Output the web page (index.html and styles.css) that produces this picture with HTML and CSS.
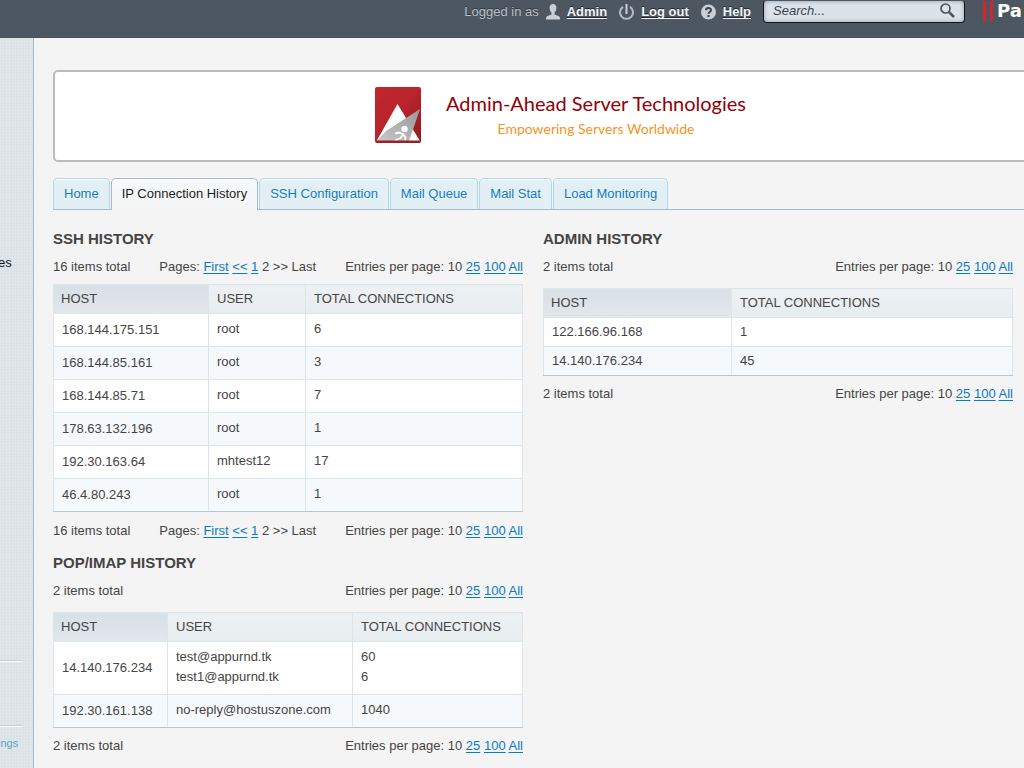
FILE: index.html
```html
<!DOCTYPE html>
<html lang="en">
<head>
    <meta charset="UTF-8">
    <meta name="viewport" content="width=device-width, initial-scale=1.0">
    <title>IP Connection History</title>
    <link rel="stylesheet" href="styles.css">
</head>
<body>
    <header class="topbar">
        <span class="logged">Logged in as</span>
        <a class="top-link user" href="#">
            <svg width="14" height="16" viewBox="0 0 14 16"><path d="M7 0C4.600 0 3.500 1.700 3.600 4C3.700 6.300 4.600 7.800 5.500 8.700V10.500L1.500 12C.5 12.400 0 13.300 0 15.500H14C14 13.300 13.500 12.400 12.500 12L8.500 10.500V8.700C9.400 7.800 10.300 6.300 10.400 4C10.500 1.700 9.400 0 7 0Z" fill="#c9cfd6"/></svg>
            <span>Admin</span>
        </a>
        <a class="top-link" href="#">
            <svg width="15" height="16" viewBox="0 0 15 16"><path d="M4 2.800A6.500 6.500 0 1 0 11 2.800" fill="none" stroke="#b4bbc3" stroke-width="2"/><path d="M7.500 0V10" stroke="#c9cfd6" stroke-width="2"/></svg>
            <span>Log out</span>
        </a>
        <a class="top-link" href="#">
            <svg width="15" height="16" viewBox="0 0 15 16"><circle cx="7.500" cy="8" r="7.500" fill="#c9cfd6"/><path d="M5 6.300C5 3.400 10 3.400 10 6.200C10 7.900 7.500 8 7.500 9.800" fill="none" stroke="#3d454e" stroke-width="2"/><path d="M6.400 11H8.600V13H6.400Z" fill="#3d454e"/></svg>
            <span>Help</span>
        </a>
        <form class="search">
            <input type="text" placeholder="Search..." aria-label="Search">
            <button type="button" aria-label="Find">
                <svg width="15" height="15" viewBox="0 0 15 15"><circle cx="5.500" cy="5.500" r="4.500" fill="none" stroke="#4d5761" stroke-width="1.700"/><path d="M8.800 8.800L14 14" stroke="#4d5761" stroke-width="2.600"/></svg>
            </button>
        </form>
        <div class="brand">
            <svg width="11" height="20" viewBox="0 0 11 20"><path d="M0 0H3V20H0ZM7 0H10V20H7Z" fill="#d8232f"/></svg>
            <span>Pa</span>
        </div>
    </header>

    <div class="layout">
        <nav class="sidebar">
            <a class="side-item" href="#">es</a>
            <hr class="first">
            <hr>
            <a class="side-small" href="#">ings</a>
        </nav>

        <main class="content">
            <div class="banner">
                <svg width="46" height="56" viewBox="0 0 46 56">
                    <defs>
                        <linearGradient id="red" x1="0" y1="0" x2="1" y2="1"><stop offset="0" stop-color="#c1272d"/><stop offset=".5" stop-color="#b8232c"/><stop offset="1" stop-color="#8c1c20"/></linearGradient>
                        <linearGradient id="grey" x1="0" y1="1" x2="1" y2="0"><stop offset="0" stop-color="#c8c8c8"/><stop offset="1" stop-color="#989898"/></linearGradient>
                    </defs>
                    <rect width="46" height="56" rx="2" fill="url(#red)"/>
                    <path d="M22.500 17L45 54H1.500Z" fill="#fff"/>
                    <path d="M45 22L34 54H1.500L11 44Z" fill="url(#grey)"/>
                    <circle cx="29.500" cy="42" r="3.200" fill="#fff"/>
                    <path d="M20 46.500L24.500 45.500L28.500 47.500M28 47L30.500 50.500L30 54M28 47.500L25.500 51L20 53.500" fill="none" stroke="#fff" stroke-width="1.800"/>
                    <path d="M1 54.500H45" stroke="#9c1f26" stroke-width="2"/>
                </svg>
                <div class="banner-text">
                    <div class="banner-title">Admin-Ahead Server Technologies</div>
                    <div class="banner-sub">Empowering Servers Worldwide</div>
                </div>
            </div>

            <nav class="tabs">
                <a href="#">Home</a>
                <a href="#" class="active">IP Connection History</a>
                <a href="#">SSH Configuration</a>
                <a href="#">Mail Queue</a>
                <a href="#">Mail Stat</a>
                <a href="#">Load Monitoring</a>
            </nav>

            <div class="columns">
                <div class="column">
                    <section class="panel compact">
                        <h2>SSH HISTORY</h2>
                        <div class="pager">
                            <span>16 items total</span>
                            <span>Pages: <a href="#">First</a> <a href="#">&lt;&lt;</a> <a href="#">1</a> 2 &gt;&gt; Last</span>
                            <span>Entries per page: 10 <a href="#">25</a> <a href="#">100</a> <a href="#">All</a></span>
                        </div>
                        <table>
                            <colgroup><col class="ssh-host"><col class="ssh-user"><col></colgroup>
                            <thead><tr><th class="sorted">HOST</th><th>USER</th><th>TOTAL CONNECTIONS</th></tr></thead>
                            <tbody>
                                <tr><td class="host">168.144.175.151</td><td>root</td><td>6</td></tr>
                                <tr><td class="host">168.144.85.161</td><td>root</td><td>3</td></tr>
                                <tr><td class="host">168.144.85.71</td><td>root</td><td>7</td></tr>
                                <tr><td class="host">178.63.132.196</td><td>root</td><td>1</td></tr>
                                <tr><td class="host">192.30.163.64</td><td>mhtest12</td><td>17</td></tr>
                                <tr><td class="host">46.4.80.243</td><td>root</td><td>1</td></tr>
                            </tbody>
                        </table>
                        <div class="pager">
                            <span>16 items total</span>
                            <span>Pages: <a href="#">First</a> <a href="#">&lt;&lt;</a> <a href="#">1</a> 2 &gt;&gt; Last</span>
                            <span>Entries per page: 10 <a href="#">25</a> <a href="#">100</a> <a href="#">All</a></span>
                        </div>
                    </section>

                    <section class="panel">
                        <h2>POP/IMAP HISTORY</h2>
                        <div class="pager">
                            <span>2 items total</span>
                            <span>Entries per page: 10 <a href="#">25</a> <a href="#">100</a> <a href="#">All</a></span>
                        </div>
                        <table>
                            <colgroup><col class="pop-host"><col class="pop-user"><col></colgroup>
                            <thead><tr><th class="sorted">HOST</th><th>USER</th><th>TOTAL CONNECTIONS</th></tr></thead>
                            <tbody>
                                <tr><td class="host">14.140.176.234</td><td>test@appurnd.tk<br>test1@appurnd.tk</td><td>60<br>6</td></tr>
                                <tr><td class="host">192.30.161.138</td><td>no-reply@hostuszone.com</td><td>1040</td></tr>
                            </tbody>
                        </table>
                        <div class="pager">
                            <span>2 items total</span>
                            <span>Entries per page: 10 <a href="#">25</a> <a href="#">100</a> <a href="#">All</a></span>
                        </div>
                    </section>
                </div>

                <div class="column">
                    <section class="panel">
                        <h2>ADMIN HISTORY</h2>
                        <div class="pager">
                            <span>2 items total</span>
                            <span>Entries per page: 10 <a href="#">25</a> <a href="#">100</a> <a href="#">All</a></span>
                        </div>
                        <table class="tight">
                            <colgroup><col class="admin-host"><col></colgroup>
                            <thead><tr><th class="sorted">HOST</th><th>TOTAL CONNECTIONS</th></tr></thead>
                            <tbody>
                                <tr><td class="host">122.166.96.168</td><td>1</td></tr>
                                <tr><td class="host">14.140.176.234</td><td>45</td></tr>
                            </tbody>
                        </table>
                        <div class="pager">
                            <span>2 items total</span>
                            <span>Entries per page: 10 <a href="#">25</a> <a href="#">100</a> <a href="#">All</a></span>
                        </div>
                    </section>
                </div>
            </div>
        </main>
    </div>
</body>
</html>
```

FILE: styles.css
```css
* {
    box-sizing: border-box;
}
body {
    margin: 0;
    min-height: 100vh;
    display: flex;
    flex-direction: column;
    overflow-x: hidden;
    background: #f4f4f4;
    color: #444;
    font-family: "Liberation Sans", Arial, sans-serif;
    font-size: 13px;
    line-height: 20px;
}
a {
    color: #0a7ac4;
    text-decoration: underline;
    text-decoration-thickness: 1px;
    text-decoration-skip-ink: none;
    text-underline-offset: 2px;
}

/* top bar */
.topbar {
    display: flex;
    justify-content: flex-end;
    align-items: flex-start;
    height: 38px;
    overflow: hidden;
    background: #4d5761;
    border-bottom: 1px solid #48525b;
}
.logged {
    padding-top: 2px;
    margin-right: 7px;
    color: #b9c0c7;
    text-shadow: 0 -1px 0 #30373e;
}
.top-link {
    display: flex;
    align-items: center;
    gap: 7px;
    padding-top: 2px;
    margin-right: 12px;
    color: #f2f6fa;
    font-weight: bold;
    text-decoration: none;
    text-shadow: 0 -1px 0 #20262c;
}
.top-link span {
    text-decoration: underline;
    text-decoration-thickness: 1px;
    text-decoration-skip-ink: none;
    text-underline-offset: 2px;
}
.search {
    display: flex;
    align-items: center;
    width: 202px;
    height: 23px;
    margin: 0;
    padding: 0 9px 2px;
    border: 1px solid #14181c;
    border-top-color: #4d5761;
    border-radius: 4px;
    background: #dbe2ea;
    box-shadow: inset 0 0 4px #8f9aa6;
}
.search input {
    flex: 1;
    min-width: 0;
    padding: 0;
    border: 0;
    outline: 0;
    background: none;
    font: italic 13px "Liberation Sans", Arial, sans-serif;
}
.search input::placeholder {
    color: #3a444e;
    opacity: 1;
}
.search button {
    display: flex;
    padding: 0;
    border: 0;
    background: none;
}
.brand {
    display: flex;
    gap: 3px;
    width: 41px;
    margin-left: 18px;
    padding-top: 1px;
    color: #fff;
    font: bold 18px/20px "DejaVu Sans", sans-serif;
}
.brand svg {
    flex: none;
}

/* sidebar */
.layout {
    display: flex;
    flex: 1;
}
.sidebar {
    flex: none;
    width: 34px;
    padding-top: 215px;
    border-right: 1px solid #a9b6bf;
    background:
        repeating-linear-gradient(90deg, rgba(255,255,255,.12) 0 1px, transparent 1px 3px),
        repeating-linear-gradient(0deg, rgba(255,255,255,.12) 0 1px, transparent 1px 3px),
        #dbe2e6;
}
.side-item,
.side-small {
    display: block;
    margin-left: -2px;
    color: #111;
    text-decoration: none;
}
.side-small {
    color: #5f9fc6;
    font-size: 11px;
}
.sidebar hr {
    height: 2px;
    margin: 63px 10px 6px 0;
    border: 0;
    border-top: 1px solid #c3cdd3;
    background: #fff;
}
.sidebar hr.first {
    margin: 387px 10px 0 0;
}

/* banner */
.content {
    flex: 1;
    min-width: 0;
    padding: 32px 0 12px 19px;
}
.banner {
    display: flex;
    justify-content: center;
    align-items: center;
    gap: 25px;
    height: 92px;
    margin-right: -16px;
    padding: 0 0 2px 28px;
    border: 2px solid #bbb;
    border-radius: 5px;
    background: #fff;
}
.banner-text {
    text-align: center;
}
.banner-title {
    color: #930006;
    font: 20px/28px Lato, sans-serif;
}
.banner-sub {
    color: #f7941d;
    font: 14px/24px Lato, sans-serif;
}

/* tabs */
.tabs {
    display: flex;
    gap: 1px;
    margin-top: 16px;
    border-bottom: 1px solid #a9bac6;
}
.tabs a {
    height: 31px;
    padding: 5px 10px;
    border: 1px solid #afd6ea;
    border-bottom: 0;
    border-radius: 5px 5px 0 0;
    background: #e2eff5;
    box-shadow: inset 0 1px 0 #fff;
    text-decoration: none;
    text-shadow: 0 1px 0 #fff;
    white-space: nowrap;
}
.tabs a.active {
    height: 32px;
    margin-bottom: -1px;
    border-color: #a9bac6;
    background: linear-gradient(#f5fafc, #f4f4f4);
    color: #1a1a1a;
}

/* history panels */
.columns {
    display: grid;
    grid-template-columns: 1fr 1fr;
    gap: 20px;
    padding: 19px 11px 0 0;
}
.panel {
    margin-bottom: 12px;
}
h2 {
    margin: 0 0 8px;
    font-size: 15px;
    line-height: 20px;
}
.pager {
    display: flex;
    justify-content: space-between;
    white-space: nowrap;
}
table {
    width: 100%;
    margin: 11px 0 8px;
    border-collapse: collapse;
    table-layout: fixed;
    background: #fff;
}
.compact table {
    margin: 7px 0 9px;
}
th, td {
    border: 1px solid #dbe5ec;
    text-align: left;
}
th {
    padding: 4px 8px;
    background: linear-gradient(#edf1f4, #e7ecef);
    font-weight: normal;
}
th.sorted {
    padding-left: 7px;
    background: linear-gradient(#d8e0e6, #e2e7eb);
}
td {
    padding: 5px 8px 7px;
    vertical-align: top;
}
td.host {
    padding: 6px 8px;
    vertical-align: middle;
}
.tight td,
.tight td.host {
    padding: 4px 8px;
}
tbody tr:nth-child(even) {
    background: #f5f9fc;
}
tbody tr:last-child td {
    border-bottom-color: #b8c8d1;
}
.ssh-host {
    width: 155px;
}
.ssh-user {
    width: 97px;
}
.pop-host {
    width: 114px;
}
.pop-user {
    width: 185px;
}
.admin-host {
    width: 188px;
}
```
